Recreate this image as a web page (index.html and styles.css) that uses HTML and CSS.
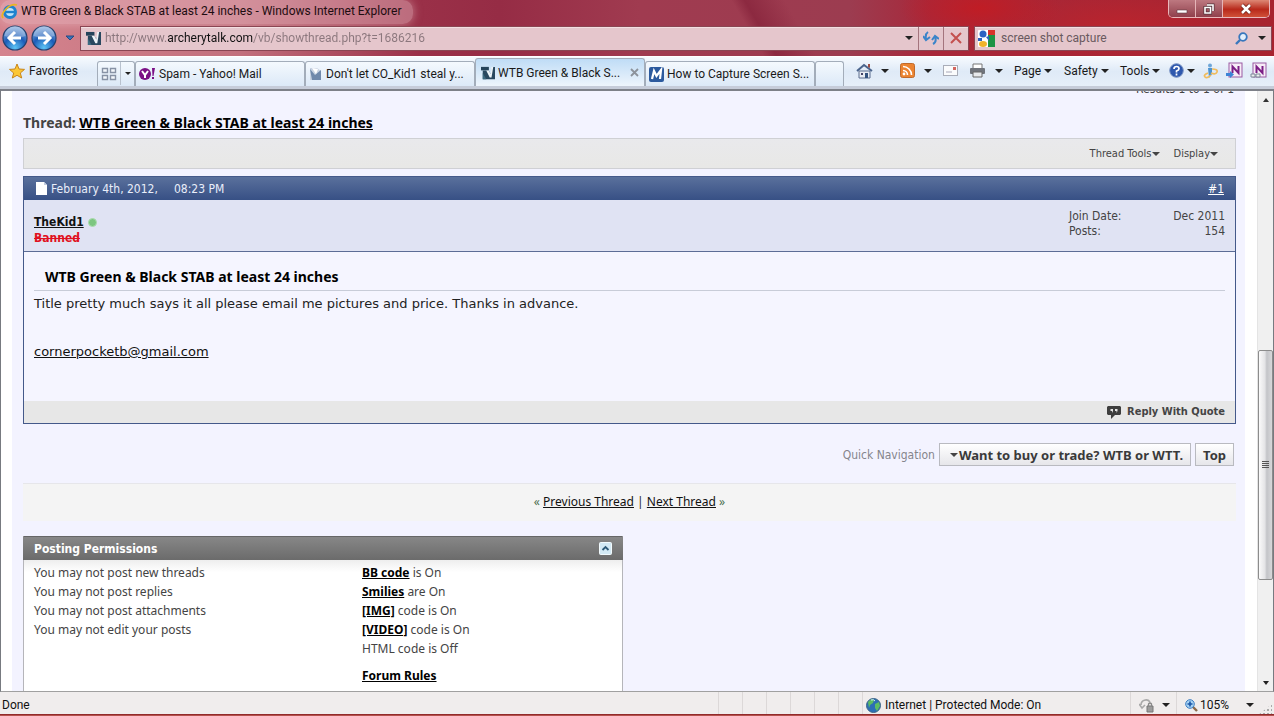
FILE: index.html
```html
<!DOCTYPE html>
<html lang="en">
<head>
<meta charset="utf-8">
<title>WTB Green &amp; Black STAB at least 24 inches</title>
<link rel="stylesheet" href="styles.css">
</head>
<body>
<svg class="defs" width="0" height="0" aria-hidden="true">
  <defs>
    <radialGradient id="orb" cx="50%" cy="90%" r="90%"><stop offset="0" stop-color="#5cc4f5"/><stop offset=".5" stop-color="#1c5cb8"/><stop offset="1" stop-color="#8fb4e0"/></radialGradient>
    <symbol id="vb" viewBox="0 0 16 16"><path d="M0 1h9v4H0z" fill="#24435a"/><path d="M2 5h7l2 4 2-8h3v14H2z" fill="#29485f"/><path d="M6 5h3l2 4 1-8h2l-2 12h-2z" fill="#eef4f8"/><path d="M2 8l4 7H2z" fill="#3c6a80"/></symbol>
    <symbol id="onenote" viewBox="0 0 17 17"><rect x="3" y="1" width="13" height="14" fill="#f7ecf7" stroke="#9a5aa2"/><path d="M6.500 11V4.500l6 6.500V4" fill="none" stroke="#7b1e85" stroke-width="2"/></symbol>
  </defs>
</svg>
<header class="chrome">
  <div class="titlebar">
    <div class="title">
      <svg width="18" height="18" viewBox="0 0 18 18"><circle cx="9" cy="10" r="5.500" fill="#bfe4fa" stroke="#1f83cf" stroke-width="3"/><path d="M4 10h10" stroke="#1f83cf" stroke-width="2.400"/><path d="M2 16C-1 12 8 1 16 3" fill="none" stroke="#e8b424" stroke-width="1.800"/></svg>
      <span>WTB Green &amp; Black STAB at least 24 inches - Windows Internet Explorer</span>
    </div>
    <div class="winbtns">
      <button class="wb" aria-label="Minimize"><svg width="12" height="12" viewBox="0 0 12 12"><path d="M1 7h10v3H1z" fill="#fff" stroke="#5c3a42" stroke-width=".6"/></svg></button>
      <button class="wb" aria-label="Restore"><svg width="12" height="12" viewBox="0 0 12 12"><path d="M4 2h6v6M2 4.500h5.500v5.500H2z" fill="none" stroke="#513039" stroke-width="3"/><path d="M4 2h6v6M2 4.500h5.500v5.500H2z" fill="none" stroke="#fff" stroke-width="1.600"/></svg></button>
      <button class="wb wb-close" aria-label="Close"><svg width="14" height="12" viewBox="0 0 14 12"><path d="M3 2l8 8M11 2l-8 8" stroke="#6b2018" stroke-width="4"/><path d="M3 2l8 8M11 2l-8 8" stroke="#fff" stroke-width="2.500"/></svg></button>
    </div>
  </div>
  <div class="navrow">
    <button class="orb" aria-label="Back"><svg width="26" height="26" viewBox="0 0 26 26"><circle cx="13" cy="13" r="12" fill="url(#orb)" stroke="#24406e" stroke-width="1.200"/><path d="M2.500 11a10.500 10 0 0 1 21 0q-10 4-21 0z" fill="#fff" opacity=".3"/><path d="M19 13H8M13 7l-6 6 6 6" fill="none" stroke="#fff" stroke-width="3"/></svg></button>
    <button class="orb" aria-label="Forward"><svg width="26" height="26" viewBox="0 0 26 26"><circle cx="13" cy="13" r="12" fill="url(#orb)" stroke="#24406e" stroke-width="1.200"/><path d="M2.500 11a10.500 10 0 0 1 21 0q-10 4-21 0z" fill="#fff" opacity=".3"/><path d="M7 13h11M13 7l6 6-6 6" fill="none" stroke="#fff" stroke-width="3"/></svg></button>
    <button class="recent" aria-label="Recent pages"><svg width="10" height="6" viewBox="0 0 10 6"><path d="M1 1h8L5 5z" fill="#3973bd" stroke="#264a80"/></svg></button>
    <div class="address">
      <svg width="15" height="15"><use href="#vb"/></svg>
      <input class="url" aria-label="Address" value="http://www.archerytalk.com/vb/showthread.php?t=1686216">
      <button class="plain" aria-label="Show history"><i class="caret"></i></button>
      <button class="addrbtn" aria-label="Refresh"><svg width="16" height="16" viewBox="0 0 16 16"><path d="M5 2q-3 2-2 7M0 6l3 4 4-3" fill="none" stroke="#3b84c9" stroke-width="2"/><path d="M10 14q4-2 2-7M9 10l3-4 4 3" fill="none" stroke="#3b84c9" stroke-width="2"/></svg></button>
      <button class="addrbtn" aria-label="Stop"><svg width="12" height="12" viewBox="0 0 12 12"><path d="M1 1l10 10M11 1L1 11" stroke="#c4504f" stroke-width="2"/></svg></button>
    </div>
    <div class="search">
      <svg width="17" height="17" viewBox="0 0 17 17"><rect width="17" height="17" rx="1" fill="#fff"/><path d="M10 0h7v9h-7z" fill="#d8322b"/><path d="M10 5h7v12h-7z" fill="#1d9344"/><circle cx="5" cy="4" r="3.500" fill="#2b62c2"/><path d="M8 7l3-1v5z" fill="#2b62c2"/><ellipse cx="5" cy="14" rx="4" ry="3" fill="#f2b32a"/><path d="M0 8h4v3H0z" fill="#2b62c2"/></svg>
      <input class="query" aria-label="Search" value="screen shot capture">
      <button class="plain" aria-label="Search"><svg width="13" height="13" viewBox="0 0 13 13"><circle cx="8" cy="5" r="3.800" fill="#e3effb" stroke="#3877bd" stroke-width="1.800"/><path d="M5 8l-4 4" stroke="#3877bd" stroke-width="2.400"/></svg></button>
      <button class="plain" aria-label="Search options"><i class="caret"></i></button>
    </div>
  </div>
  <div class="commandrow">
    <button class="favorites"><svg width="16" height="16" viewBox="0 0 16 16"><path d="M8 1l2 5 5.500.4-4.200 3.600L12.700 15 8 12.300 3.300 15l1.400-5L.5 6.400 6 6z" fill="#fbc736" stroke="#c98518"/></svg><span>Favorites</span></button>
    <nav class="tabs">
      <div class="quick">
        <button class="plain q1" aria-label="Quick tabs"><svg width="17" height="14" viewBox="0 0 17 14"><path d="M1.500 1.500h5v4h-5zM9.500 1.500h5v4h-5zM1.500 8.500h5v4h-5zM9.500 8.500h5v4h-5z" fill="#f3f7fc" stroke="#8792a5" stroke-width="1.400"/></svg></button>
        <button class="plain q2" aria-label="Tab list"><i class="caret"></i></button>
      </div>
      <button class="tab"><svg width="17" height="14" viewBox="0 0 17 14"><circle cx="6" cy="7" r="6" fill="#7b1085"/><path d="M3 4l3 4 3-4M6 8v3" fill="none" stroke="#fff" stroke-width="2"/><path d="M13 1h3l-1.500 8h-1zM13 10h2v2h-2z" fill="#7b1085"/></svg><span>Spam - Yahoo! Mail</span></button>
      <button class="tab"><svg width="14" height="14" viewBox="0 0 14 14"><path d="M1 1h7l4 3v9H1z" fill="#c9d3e2"/><path d="M1 2l5 6 6-5v10H3z" fill="#7089ab"/><path d="M3 1l4 6 2-5" fill="#fff"/></svg><span>Don't let CO_Kid1 steal y...</span></button>
      <button class="tab active"><svg width="14" height="14"><use href="#vb"/></svg><span>WTB Green &amp; Black S...</span><svg class="x" width="9" height="9" viewBox="0 0 9 9"><path d="M1 1l7 7M8 1L1 8" stroke="#8c929b" stroke-width="1.800"/></svg></button>
      <button class="tab"><svg width="15" height="15" viewBox="0 0 15 15"><rect width="15" height="15" rx="2" fill="#2c5a9e"/><path d="M3 12l2-8 2.500 5L12 3l-1 9" fill="none" stroke="#fff" stroke-width="2.200"/></svg><span>How to Capture Screen S...</span></button>
      <button class="newtab" aria-label="New tab"></button>
    </nav>
    <div class="tools">
      <button class="tool w44" aria-label="Home"><svg width="17" height="16" viewBox="0 0 17 16"><path d="M3 8h11v7H3z" fill="#e9ecf3" stroke="#5b6d8e"/><path d="M1 8l7-6 8 6" fill="none" stroke="#4b648c" stroke-width="2"/><path d="M12 1h2v4l-2-1z" fill="#9e4e45"/><path d="M9 10h3v5H9z" fill="#34527e"/><path d="M5 10h2v2H5z" fill="#446"/></svg><i class="caret"></i></button>
      <button class="tool w43" aria-label="Feeds"><svg width="15" height="15" viewBox="0 0 15 15"><rect x=".5" y=".5" width="14" height="14" rx="2" fill="#ec8431" stroke="#bf6a2c"/><circle cx="4" cy="11" r="1.400" fill="#fff"/><path d="M3 7.500a4.500 4.500 0 0 1 4.500 4.500M3 3.500A8.500 8.500 0 0 1 11.500 12" fill="none" stroke="#fff" stroke-width="1.600"/></svg><i class="caret"></i></button>
      <button class="tool w26" aria-label="Read mail"><svg width="15" height="11" viewBox="0 0 15 11"><rect x=".5" y=".5" width="14" height="10" fill="#fafbfc" stroke="#a9adb8"/><path d="M10 2h3v3h-3z" fill="#d2665f"/><path d="M3 7h6" stroke="#aab" /></svg></button>
      <button class="tool w45" aria-label="Print"><svg width="17" height="15" viewBox="0 0 17 15"><path d="M4 1h9v5H4z" fill="#fff" stroke="#777"/><rect x="1" y="5" width="15" height="6" rx="1" fill="#70747c"/><path d="M4 9h9v5H4z" fill="#e7e9ec" stroke="#666"/></svg><i class="caret"></i></button>
      <button class="tool w50">Page<i class="caret"></i></button>
      <button class="tool w56">Safety<i class="caret"></i></button>
      <button class="tool w49">Tools<i class="caret"></i></button>
      <button class="tool w34" aria-label="Help"><svg width="15" height="15" viewBox="0 0 15 15"><circle cx="7.500" cy="7.500" r="6.800" fill="#2e58ae" stroke="#7a93c4"/><path d="M5 6q0-2.500 2.500-2.500T10 5.700q0 1.200-2.500 2.300v1.500M7.500 10.500v2" fill="none" stroke="#fff" stroke-width="1.700"/></svg><i class="caret"></i></button>
      <button class="tool w23" aria-label="Messenger"><svg width="15" height="16" viewBox="0 0 15 16"><circle cx="7" cy="2.500" r="2" fill="#6ea6d8"/><path d="M5 5h4v6l-3 4z" fill="#4b93d1"/><path d="M9 6q6 0 5 3t-6 1M5 10q-5 2-3 4t6-2" fill="none" stroke="#f0bc5d" stroke-width="1.700"/></svg></button>
      <button class="tool w24" aria-label="Send to OneNote"><svg width="17" height="17" viewBox="0 0 17 17"><use href="#onenote"/><path d="M0 11h4V9l4 3.500L4 16v-2H0z" fill="#3c83d6"/></svg></button>
      <button class="tool w17" aria-label="Linked notes"><svg width="17" height="17" viewBox="0 0 17 17"><use href="#onenote"/><path d="M1 12h4v3H1zM6 12h4v3H6z" fill="#eee" stroke="#7b8797"/></svg></button>
    </div>
  </div>
</header>
<div class="viewport">
  <div class="scroller">
    <main class="page">
      <p class="results">Results 1 to 1 of 1</p>
      <h1 class="thread">Thread: <a href="#post1">WTB Green &amp; Black STAB at least 24 inches</a></h1>
      <div class="toolsbar"><button>Thread Tools<i class="caret"></i></button><button>Display<i class="caret"></i></button></div>
      <article class="post" id="post1">
        <div class="posthead"><svg width="11" height="13" viewBox="0 0 11 13"><path d="M0 0h8l3 3v10H0z" fill="#fff"/><path d="M8 0v3h3" fill="#c3cde0"/></svg><span>February 4th, 2012,</span><span class="time">08:23 PM</span><a href="#post1">#1</a></div>
        <div class="user">
          <div><div class="name"><a href="#user">TheKid1</a><i class="online"></i></div><div class="banned">Banned</div></div>
          <dl><dt>Join Date:</dt><dd>Dec 2011</dd><dt>Posts:</dt><dd>154</dd></dl>
        </div>
        <div class="postbody">
          <h2>WTB Green &amp; Black STAB at least 24 inches</h2>
          <p>Title pretty much says it all please email me pictures and price. Thanks in advance.</p>
          <p class="mail"><a href="mailto:cornerpocketb@gmail.com">cornerpocketb@gmail.com</a></p>
        </div>
        <div class="postfoot"><button><svg width="14" height="13" viewBox="0 0 14 13"><path d="M1 0h12l1 1v7l-1 1H8l-4 4V9H1L0 8V1z" fill="#3e3e3e"/><path d="M3.500 3h2.500v2L5 7V5H3.500zM8 3h2.500v2l-1 2V5H8z" fill="#e6e6e6"/></svg><span>Reply With Quote</span></button></div>
      </article>
      <div class="quicknav"><span>Quick Navigation</span><button class="forum"><i class="caret"></i>Want to buy or trade? WTB or WTT.</button><button>Top</button></div>
      <div class="prevnext"><span class="ang">«</span> <a href="#prev">Previous Thread</a> | <a href="#next">Next Thread</a> <span class="ang">»</span></div>
      <section class="perms">
        <div class="permhead"><h3>Posting Permissions</h3><button aria-label="Collapse"><svg width="13" height="13" viewBox="0 0 13 13"><rect x=".5" y=".5" width="12" height="12" rx="1" fill="#d3e9f4" stroke="#f2fafd"/><path d="M3.500 8l3-3 3 3" fill="none" stroke="#2e5a78" stroke-width="1.800"/></svg></button></div>
        <div class="permbody">
          <ul><li>You may not post new threads</li><li>You may not post replies</li><li>You may not post attachments</li><li>You may not edit your posts</li></ul>
          <ul><li><a href="#bb">BB code</a> is On</li><li><a href="#sm">Smilies</a> are On</li><li><a href="#img">[IMG]</a> code is On</li><li><a href="#vid">[VIDEO]</a> code is On</li><li>HTML code is Off</li><li class="rules"><a href="#rules">Forum Rules</a></li></ul>
        </div>
      </section>
    </main>
  </div>
  <div class="scrollbar">
    <button aria-label="Scroll up"><i class="caret up"></i></button>
    <div class="before"></div>
    <div class="thumb"><i></i><i></i><i></i><i></i></div>
    <div class="after"></div>
    <button aria-label="Scroll down"><i class="caret"></i></button>
  </div>
</div>
<footer class="status">
  <span class="done">Done</span>
  <span class="cell"></span><span class="cell"></span><span class="cell"></span><span class="cell"></span><span class="cell"></span><span class="cell"></span>
  <span class="zone"><svg width="15" height="15" viewBox="0 0 15 15"><circle cx="7.500" cy="7.500" r="7" fill="#2c6fb5" stroke="#3f6686"/><path d="M2 4q3-4 6-2l-1 3-3 2-1 3zM9 6l4-2 1 4-3 5-2-3z" fill="#5dbd63"/><path d="M5 2q3-1 4 1" stroke="#d9f2fa" fill="none"/></svg>Internet | Protected Mode: On</span>
  <button class="inpriv" aria-label="Filtering"><svg width="16" height="15" viewBox="0 0 16 15"><path d="M2 7a5 5 0 0 1 9-3M0 6l3 4 3-3" fill="none" stroke="#a9a9a9" stroke-width="1.600"/><path d="M8 8h6v6H8z" fill="#9c9c9c" stroke="#777"/><path d="M9.500 8V6q1.500-2 3 0v2" fill="none" stroke="#888" stroke-width="1.300"/></svg><i class="caret"></i></button>
  <button class="zoom"><svg width="13" height="13" viewBox="0 0 13 13"><path d="M8 8l4 4" stroke="#8a6a4c" stroke-width="2.400"/><circle cx="5" cy="5" r="4.300" fill="#a6d2f4" stroke="#3b7cc0"/><path d="M5 2.500v5M2.500 5h5" stroke="#1a55a5" stroke-width="1.600"/></svg><span>105%</span><i class="caret"></i></button>
  <span class="grip"></span>
</footer>
<div class="edge"></div>
</body>
</html>
```

FILE: styles.css
```css
* { box-sizing: border-box; }
html, body { height: 100%; }
body {
  margin: 0;
  display: flex;
  flex-direction: column;
  overflow: hidden;
  font: 12px/16px Roboto, "Open Sans", sans-serif;
  color: #1a1a1a;
  background: #f0eded;
}
button, input { font: inherit; color: inherit; border: 0; padding: 0; margin: 0; background: none; }
button { display: flex; align-items: center; white-space: nowrap; flex: none; }
svg { flex: none; display: block; }
.defs { position: absolute; }
a { color: #111; }
h1, h2, h3, p, ul, dl, dd { margin: 0; padding: 0; }
ul { list-style: none; }
.caret { flex: none; width: 0; height: 0; border: 4px solid transparent; border-top-color: #222; border-bottom: 0; }
.caret.up { border-top: 0; border-bottom: 4px solid #333; }

/* window frame */
.chrome {
  flex: none;
  background:
    radial-gradient(ellipse 80px 34px at 980px 8px, rgba(198, 26, 32, .8), transparent),
    radial-gradient(ellipse 120px 34px at 1120px 25px, rgba(190, 36, 44, .8), transparent),
    linear-gradient(60deg, transparent 59%, #8c2940 60%, transparent 63%),
    linear-gradient(90deg, #d5848e 0, #c2707d 240px, #9a3048 420px, #962c45 500px, #a03b50 640px, #9c3c50 850px, #a8283a 930px, #a8232f 100%);
}
.titlebar { display: flex; justify-content: space-between; height: 24px; }
.title { display: flex; align-items: center; gap: 2px; padding: 0 12px 2px 1px; border-radius: 10px; background: rgba(238, 196, 202, .4); box-shadow: 0 0 10px rgba(238, 196, 202, .5); color: #1d0c10; }
.winbtns { display: flex; height: 18px; margin-right: 4px; border: 1px solid #eab9bc; border-top: 0; border-radius: 0 0 5px 5px; overflow: hidden; }
.wb { width: 27px; justify-content: center; background: linear-gradient(#bd7880, #90404c); border-right: 1px solid #e5b5b8; }
.wb-close { width: 46px; border: 0; background: linear-gradient(#dd8875, #b8291b 55%, #d05138); }
.navrow { display: flex; align-items: center; height: 32px; padding: 0 2px 4px; }
.orb { margin-right: 3px; }
.recent { width: 20px; justify-content: center; }
.address, .search { display: flex; align-items: center; height: 25px; border: 1px solid #8a4653; background: #e5c6cc; box-shadow: inset 0 1px 0 #f3dfe2; }
.address { flex: 1; padding-left: 5px; }
.url {
  flex: 1;
  min-width: 0;
  margin-left: 4px;
  height: 20px;
  color: transparent;
  background: linear-gradient(90deg, #8b777d 62px, #111 62px, #111 148px, #8b777d 148px);
  -webkit-background-clip: text;
  background-clip: text;
}
.plain { justify-content: center; height: 23px; padding: 0 5px; }
.addrbtn { width: 25px; height: 23px; justify-content: center; border-left: 1px solid #a4747d; }
.search { width: 298px; margin-left: 5px; padding-left: 3px; }
.query { flex: 1; min-width: 0; margin-left: 6px; color: #6a5a60; }
.commandrow { display: flex; height: 30px; border-top: 1px solid #fff; background: linear-gradient(#f6fafe, #dfeaf7 50%, #e6eff9); }
.favorites { width: 97px; padding: 0 0 2px 9px; gap: 4px; }
.tabs { display: flex; align-items: flex-end; flex: none; }
.quick, .tab, .newtab { height: 25px; border: 1px solid #a3adba; border-bottom: 0; border-radius: 3px 3px 0 0; background: linear-gradient(#f4f9fe, #dce9f7); }
.quick { display: flex; width: 38px; }
.q1 { width: 23px; border-right: 1px solid #b9c2ce; }
.q2 { width: 13px; }
.quick .caret { border-width: 3px 3px 0; }
.tab { width: 170px; padding: 0 3px; gap: 3px; }
.tab.active { height: 28px; padding: 0 5px; background: linear-gradient(#bfdcf6, #eef5fc); }
.tab .x { margin-left: auto; }
.newtab { width: 29px; }
.tools { display: flex; flex: 1; justify-content: flex-end; padding: 0 7px 2px 0; }
.tool { gap: 3px; }
.tool svg + .caret { margin-left: auto; margin-right: 11px; }
.w17 { width: 17px; } .w23 { width: 23px; } .w24 { width: 24px; } .w26 { width: 26px; }
.w34 { width: 34px; } .w43 { width: 43px; } .w44 { width: 44px; } .w45 { width: 45px; }
.w49 { width: 49px; } .w50 { width: 50px; } .w56 { width: 56px; }

/* document area */
.viewport { flex: 1; min-height: 0; display: flex; border: 1px solid #777a80; border-top: 2px solid #7d8088; border-bottom: 1px solid #a0a0a0; box-shadow: 0 -3px 0 #c6ccd9; margin-top: 3px; background: #fff; }
.scroller { flex: 1; overflow: hidden; padding: 0 12px 0 11px; }
.page { min-height: 100%; padding: 0 9px 0 11px; background: #f3f3ff; font: 12px/16px "DejaVu Sans Condensed", "DejaVu Sans", sans-serif; color: #444; }
.results { margin-top: -10px; padding-right: 2px; text-align: right; }
.thread { margin-top: 16px; font: bold 14px/20px "Noto Sans", sans-serif; }
.thread a { color: #000; }
.toolsbar { display: flex; justify-content: flex-end; gap: 14px; height: 31px; margin-top: 5px; padding-right: 17px; border: 1px solid #cfd0d4; background: linear-gradient(#e9e9ec, #e8e8e6); font-size: 11px; }
.page .caret { border-top-color: #444; }
.post { margin-top: 7px; border: 1px solid #44598a; background: #f5f5ff; }
.posthead { display: flex; align-items: center; height: 23px; padding: 0 11px 0 12px; gap: 4px; background: linear-gradient(#5a709c, #375085); color: #e9eefa; }
.posthead .time { margin-left: 12px; }
.posthead a { margin-left: auto; color: #fff; }
.user { display: flex; justify-content: space-between; height: 52px; padding: 8px 10px; background: #e0e3f3; border-bottom: 1px solid #5c6c96; }
.name { display: flex; align-items: center; gap: 4px; margin-top: 6px; font-weight: bold; }
.online { width: 9px; height: 9px; border-radius: 50%; background: #7cc67f; border: 1px solid #aadcae; }
.banned { color: #e01020; font-weight: bold; text-decoration: line-through; }
dl { display: grid; grid-template-columns: 78px 78px; grid-auto-rows: 15px; }
dd { text-align: right; }
.postbody { padding: 14px 10px 0; height: 149px; color: #222; }
.postbody h2 { padding: 0 0 2px 11px; font: bold 14px/22px "Noto Sans", sans-serif; color: #000; border-bottom: 1px solid #c8ccd8; }
.postbody p { margin-top: 5px; font: 13px/16px "DejaVu Sans", sans-serif; }
.postbody .mail { margin-top: 32px; }
.postfoot { display: flex; justify-content: flex-end; height: 22px; padding-right: 10px; background: #e7e7e7; }
.postfoot button { gap: 6px; font-size: 11px; font-weight: bold; }
.quicknav { display: flex; justify-content: flex-end; align-items: center; gap: 4px; margin-top: 19px; padding-right: 2px; color: #85858c; }
.quicknav button { height: 23px; padding: 0 7px; border: 1px solid #b9bac0; background: linear-gradient(#fff, #e6e6ea); color: #3a3a3a; font: bold 13px/16px "Noto Sans", sans-serif; }
.quicknav .forum { padding-left: 10px; gap: 1px; }
.prevnext { margin-top: 17px; height: 38px; border-top: 1px solid #e6e6ea; background: #f4f4f4; text-align: center; font: 12px/36px "Noto Sans", sans-serif; color: #222; }
.ang { color: #4c7050; }
.perms { width: 600px; margin-top: 15px; border: 1px solid #b5b5ba; border-top-color: #666; background: #fff; }
.permhead { display: flex; align-items: center; justify-content: space-between; height: 23px; padding: 0 11px; margin: 0 -1px; background: linear-gradient(#878787, #6b6b6b); }
.permhead h3 { font-size: 12px; color: #fff; }
.permbody { display: grid; grid-template-columns: 328px 1fr; height: 160px; padding: 3px 10px; background: linear-gradient(#eee, #fff 12px); font-family: "Noto Sans", sans-serif; }
.permbody li { height: 19px; line-height: 19px; }
.permbody a { color: #000; font-weight: bold; }
.permbody .rules { margin-top: 8px; }

.scrollbar { display: flex; flex-direction: column; flex: none; width: 16px; background: #f0f0f0; border-left: 1px solid #e4e4e4; }
.scrollbar button { height: 17px; justify-content: center; }
.scrollbar .caret { border-left-width: 3px; border-right-width: 3px; }
.before { flex: 244; }
.after { flex: 95; }
.thumb { flex: 229; display: flex; flex-direction: column; align-items: center; justify-content: center; gap: 1px; border: 1px solid #8c8c8c; border-radius: 2px; background: linear-gradient(90deg, #fafafa, #e4e4e6 45%, #c3c4c8 60%, #d8d8da); }
.thumb i { width: 7px; height: 1px; background: #555; }

/* status bar */
.status { display: flex; flex: none; height: 22px; background: #f0eded; color: #111; }
.status > * { display: flex; align-items: center; padding-top: 4px; border-left: 1px solid #dcd8d8; }
.status .done { flex: 1; border: 0; padding-left: 2px; }
.cell { width: 24px; }
.zone { width: 268px; gap: 4px; padding-left: 3px; }
.inpriv { width: 46px; padding-left: 8px; gap: 7px; }
.zoom { width: 78px; padding-left: 8px; gap: 2px; }
.zoom .caret { margin-left: auto; }
.status .grip { width: 18px; border: 0; margin: 12px 2px 0 0; background: radial-gradient(circle, #aaa 1px, transparent 1px) 0 0 / 4px 4px; clip-path: polygon(100% 0, 100% 100%, 30% 100%); }
.edge { flex: none; height: 2px; background: linear-gradient(#82151b, #c4665c); }
```
